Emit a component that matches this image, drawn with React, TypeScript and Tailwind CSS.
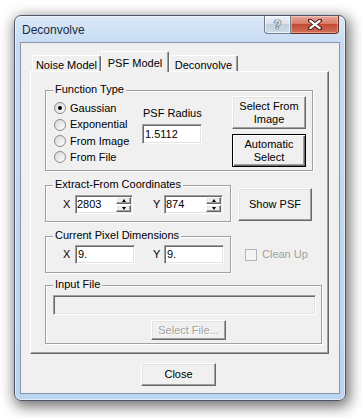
import type { ReactNode } from 'react';

/** Classic Win32 3D edges. */
const RAISED =
  'border border-t-white border-l-white border-r-[#696969] border-b-[#696969] bg-[#f0f0f0] shadow-[inset_-1px_-1px_0_#a0a0a0,inset_1px_1px_0_#e3e3e3]';
const DEFAULT_BTN =
  'border border-black bg-[#f0f0f0] shadow-[inset_1px_1px_0_#fff,inset_-1px_-1px_0_#696969,inset_-2px_-2px_0_#a0a0a0]';
const SUNKEN =
  'border border-t-[#a0a0a0] border-l-[#a0a0a0] border-r-white border-b-white shadow-[inset_1px_1px_0_#696969,inset_-1px_-1px_0_#e3e3e3]';

function Group({
  label,
  className,
  children,
}: {
  label: string;
  className: string;
  children?: ReactNode;
}) {
  return (
    <div
      className={`relative border border-[#a0a0a0] shadow-[inset_1px_1px_0_#fff,1px_1px_0_#fff] ${className}`}
    >
      <span className="absolute left-[7px] top-[-8px] bg-[#f0f0f0] px-[2px] leading-[13px]">
        {label}
      </span>
      {children}
    </div>
  );
}

function Radio({ label, checked = false }: { label: string; checked?: boolean }) {
  return (
    <div className="flex h-[16.4px] items-center gap-[4px]">
      <span className="flex h-[12px] w-[12px] items-center justify-center rounded-full border border-[#8a8a8a] bg-[linear-gradient(135deg,#d6d6d6,#ffffff)]">
        {checked && <span className="h-[4px] w-[4px] rounded-full bg-black" />}
      </span>
      <span>{label}</span>
    </div>
  );
}

function Button({
  children,
  className,
  primary = false,
  disabled = false,
}: {
  children: ReactNode;
  className: string;
  primary?: boolean;
  disabled?: boolean;
}) {
  return (
    <div
      className={`flex flex-col items-center justify-center leading-[13px] ${
        primary ? DEFAULT_BTN : RAISED
      } ${disabled ? 'text-[#a0a0a0] [text-shadow:1px_1px_0_#fff]' : ''} ${className}`}
    >
      {children}
    </div>
  );
}

function Spin({ value, className }: { value: string; className: string }) {
  return (
    <div className={`flex items-stretch bg-white ${SUNKEN} ${className}`}>
      <span className="flex-1 pl-[1px] leading-[16px]">{value}</span>
      <div className="my-[1px] mr-[1px] flex w-[15px] flex-col gap-[1px]">
        <div className={`flex flex-1 items-center justify-center ${RAISED}`}>
          <span className="h-0 w-0 border-x-[2.5px] border-b-[3px] border-x-transparent border-b-black" />
        </div>
        <div className={`flex flex-1 items-center justify-center ${RAISED}`}>
          <span className="h-0 w-0 border-x-[2.5px] border-t-[3px] border-x-transparent border-t-black" />
        </div>
      </div>
    </div>
  );
}

function Field({ value, className }: { value: string; className: string }) {
  return (
    <div className={`bg-white pl-[2px] leading-[16px] ${SUNKEN} ${className}`}>{value}</div>
  );
}

function Tab({ label, active = false }: { label: string; active?: boolean }) {
  return (
    <div
      className={`flex justify-center rounded-t-[2px] border-l border-t border-r border-l-white border-t-white border-r-[#696969] bg-[#f0f0f0] shadow-[inset_-1px_0_0_#a0a0a0] ${
        active
          ? 'relative z-10 -mb-px h-[21px] w-[68px] pt-[3px]'
          : 'h-[16px] w-[69px] pt-[1px]'
      }`}
    >
      {label}
    </div>
  );
}

export default function App() {
  return (
    <div className="min-h-[418px] bg-white pl-[14px] pt-[15px] font-['Liberation_Sans',Arial,sans-serif] text-[11px] text-black">
      <div className="h-[386px] w-[332px] rounded-[7px] border border-[#4d5866] bg-[linear-gradient(to_bottom,#dbe8f7,#c7dcf3_26px,#bcd5ef)] shadow-[2px_4px_14px_2px_rgba(0,0,0,0.55),inset_0_0_0_1px_rgba(255,255,255,0.55)]">
        {/* title bar */}
        <div className="flex h-[26px]">
          <span className="self-center pl-[7px] pt-[1px] text-[12px] text-[#1e2b3c]">Deconvolve</span>
          <div className="ml-auto mr-[6px] flex h-[18px]">
            <div className="flex w-[27px] items-center justify-center rounded-bl-[4px] border border-t-0 border-[#6d7c8f] bg-[linear-gradient(to_bottom,#eef3f9,#d9e3ee_45%,#c3d0de_50%,#cfdbe8)] shadow-[inset_0_0_0_1px_rgba(255,255,255,0.6)]">
              <span className="text-[13px] font-bold leading-none text-[#e8edf3] [text-shadow:0_0_1px_#2a3440,0_0_1px_#2a3440,0_0_1px_#2a3440]">
                ?
              </span>
            </div>
            <div className="flex w-[48px] items-center justify-center rounded-br-[4px] border border-l-0 border-t-0 border-[#6a2a20] bg-[linear-gradient(to_bottom,#e9a99b,#d97a66_45%,#c44a33_50%,#d0705a)] shadow-[inset_0_0_0_1px_rgba(255,255,255,0.35)]">
              <svg width="14" height="11" viewBox="0 0 14 11">
                <path
                  d="M2 1.5 L12 9.5 M12 1.5 L2 9.5"
                  stroke="#3b1a14"
                  strokeWidth="4"
                  strokeLinecap="round"
                />
                <path
                  d="M2.3 1.8 L11.7 9.2 M11.7 1.8 L2.3 9.2"
                  stroke="#ffffff"
                  strokeWidth="2.2"
                  strokeLinecap="round"
                />
              </svg>
            </div>
          </div>
        </div>

        {/* client area */}
        <div className="mx-[5px] h-[352px] border border-[#8797a9] bg-[#f0f0f0]">
          <div className="pl-[9px] pt-[8px]">
            <div className="flex h-[20px] items-end pl-[2px]">
              <Tab label="Noise Model" />
              <Tab label="PSF Model" active />
              <Tab label="Deconvolve" />
            </div>
            <div className="h-[283px] w-[299px] border border-t-white border-l-white border-r-[#696969] border-b-[#696969] pl-[14px] pt-[18px] shadow-[inset_-1px_-1px_0_#a0a0a0]">
              <Group label="Function Type" className="flex h-[81px] w-[268px]">
                <div className="w-[96px] pl-[8px] pt-[9px]">
                  <Radio label="Gaussian" checked />
                  <Radio label="Exponential" />
                  <Radio label="From Image" />
                  <Radio label="From File" />
                </div>
                <div className="w-[90px] pt-[15px]">
                  <div className="pl-[1px] leading-[14px]">PSF Radius</div>
                  <Field value="1.5112" className="mt-[4px] h-[20px] w-[60px] pt-[1px]" />
                </div>
                <div className="flex flex-col gap-[5px] pt-[5px]">
                  <Button className="h-[33px] w-[74px]">
                    <span>Select From</span>
                    <span>Image</span>
                  </Button>
                  <Button primary className="h-[33px] w-[74px]">
                    <span>Automatic</span>
                    <span>Select</span>
                  </Button>
                </div>
              </Group>

              <div className="mt-[14px] flex items-start">
                <Group label="Extract-From Coordinates" className="flex h-[37px] w-[186px] items-center pt-[2px]">
                  <span className="ml-[17px] w-[12px]">X</span>
                  <Spin value="2803" className="h-[19px] w-[58px]" />
                  <span className="ml-[20px] w-[11px]">Y</span>
                  <Spin value="874" className="h-[19px] w-[59px]" />
                </Group>
                <Button className="ml-[7px] mt-[3px] h-[33px] w-[74px]">Show PSF</Button>
              </div>

              <div className="mt-[14px] flex items-center">
                <Group label="Current Pixel Dimensions" className="flex h-[37px] w-[186px] items-center">
                  <span className="ml-[17px] w-[12px]">X</span>
                  <Field value="9." className="h-[19px] w-[60px]" />
                  <span className="ml-[18px] w-[11px]">Y</span>
                  <Field value="9." className="h-[19px] w-[60px]" />
                </Group>
                <div className="ml-[14px] flex items-center gap-[5px] text-[#a0a0a0]">
                  <span className="h-[12px] w-[12px] border border-[#b4b4b4] bg-[#f4f4f4]" />
                  <span>Clean Up</span>
                </div>
              </div>

              <Group label="Input File" className="mt-[12px] h-[59px] w-[277px] pl-[7px] pt-[9px]">
                <div className={`h-[20px] w-[263px] bg-[#f0f0f0] ${SUNKEN}`} />
                <Button disabled className="ml-[98px] mt-[5px] h-[20px] w-[75px]">
                  Select File...
                </Button>
              </Group>
            </div>
            <div className="pl-[111px] pt-[9px]">
              <Button className="h-[23px] w-[75px]">Close</Button>
            </div>
          </div>
        </div>
      </div>
    </div>
  );
}
